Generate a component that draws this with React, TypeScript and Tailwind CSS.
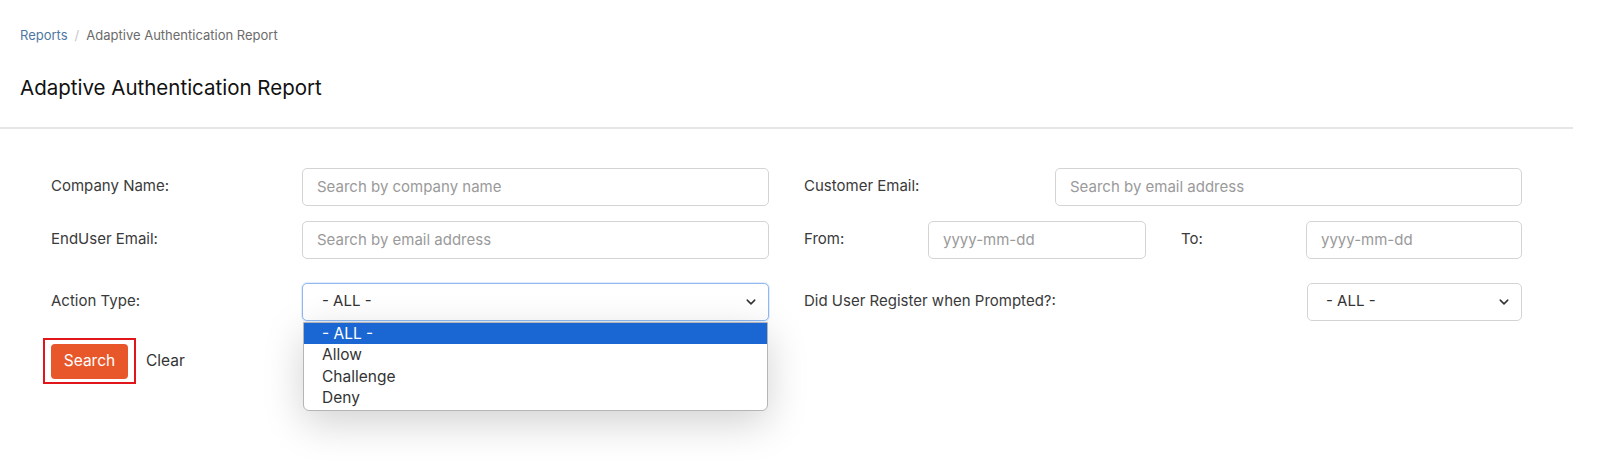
import React from 'react';

const font = { fontFamily: 'Inter, "Noto Sans", sans-serif' };

function Chevron() {
  return (
    <svg width="10" height="10" viewBox="0 0 16 16" className="shrink-0">
      <path d="M2 5l6 6 6-6" fill="none" stroke="#333" strokeWidth="2.4" strokeLinecap="round" strokeLinejoin="round" />
    </svg>
  );
}

function TextInput({ placeholder, className = '' }: { placeholder: string; className?: string }) {
  return (
    <input
      placeholder={placeholder}
      className={`h-[38px] rounded-[5px] border border-[#d4d4d4] bg-white px-[14px] text-[15px] text-[#333] placeholder:text-[#9a9a9a] outline-none ${className}`}
    />
  );
}

function Label({ children, className = '' }: { children: React.ReactNode; className?: string }) {
  return <label className={`shrink-0 text-[15px] text-[#3a3a3a] ${className}`}>{children}</label>;
}

const options = ['- ALL -', 'Allow', 'Challenge', 'Deny'];

export default function App() {
  return (
    <div className="min-h-[462px] w-[1610px] bg-white overflow-hidden" style={font}>
      <div className="w-[1573px]">
        <div className="px-5 pt-[26px]">
          <nav className="flex items-center gap-[7px] text-[13px]">
            <a className="text-[#4f77a3]">Reports</a>
            <span className="text-[#c8c8c8]">/</span>
            <span className="text-[#6b6b6b]">Adaptive Authentication Report</span>
          </nav>
          <h1 className="mt-[28px] text-[20.5px] font-normal text-[#111] leading-[28px]">Adaptive Authentication Report</h1>
        </div>
        <div className="mt-[25px] h-[2px] bg-[#e6e6e6]" />

        <div className="pl-[51px] pt-[39px] pr-[51px]">
          {/* row 1 */}
          <div className="flex gap-[35px]">
            <div className="flex w-[718px] items-center">
              <Label className="w-[251px]">Company Name:</Label>
              <TextInput placeholder="Search by company name" className="w-[467px]" />
            </div>
            <div className="flex w-[718px] items-center">
              <Label className="w-[251px]">Customer Email:</Label>
              <TextInput placeholder="Search by email address" className="w-[467px]" />
            </div>
          </div>

          {/* row 2 */}
          <div className="mt-[15px] flex gap-[35px]">
            <div className="flex w-[718px] items-center">
              <Label className="w-[251px]">EndUser Email:</Label>
              <TextInput placeholder="Search by email address" className="w-[467px]" />
            </div>
            <div className="flex w-[718px] gap-[35px]">
              <div className="flex w-[342px] items-center">
                <Label className="w-[124px]">From:</Label>
                <TextInput placeholder="yyyy-mm-dd" className="w-[218px]" />
              </div>
              <div className="flex w-[341px] items-center">
                <Label className="w-[125px]">To:</Label>
                <TextInput placeholder="yyyy-mm-dd" className="w-[216px]" />
              </div>
            </div>
          </div>

          {/* row 3 */}
          <div className="mt-[24px] flex gap-[35px]">
            <div className="flex w-[718px] items-center">
              <Label className="w-[251px]">Action Type:</Label>
              <div className="relative w-[467px]">
                <div className="flex h-[38px] items-center justify-between rounded-[5px] border border-[#8fb9f0] bg-white pl-[19px] pr-[12px] text-[15px] text-[#333] shadow-[0_0_0_1px_rgba(143,185,240,0.25)]">
                  <span>- ALL -</span>
                  <Chevron />
                </div>
                <ul className="absolute left-[1px] top-[39px] z-10 w-[465px] overflow-hidden rounded-b-[6px] border border-[#b5b5b5] bg-white pb-[1px] text-[15.5px] text-[#333] shadow-[0_12px_40px_rgba(0,0,0,0.18)]">
                  {options.map((o, i) => (
                    <li
                      key={o}
                      className={`h-[21.5px] pl-[18px] leading-[21.5px] ${i === 0 ? 'bg-[#1a66d2] text-white' : ''}`}
                    >
                      {o}
                    </li>
                  ))}
                </ul>
              </div>
            </div>
            <div className="flex w-[718px] items-center">
              <Label className="w-[503px]">Did User Register when Prompted?:</Label>
              <div className="flex h-[38px] w-[215px] items-center justify-between rounded-[5px] border border-[#d4d4d4] bg-white pl-[18px] pr-[12px] text-[15px] text-[#333]">
                <span>- ALL -</span>
                <Chevron />
              </div>
            </div>
          </div>

          {/* actions */}
          <div className="mt-[17px] flex items-center">
            <div className="-ml-[8px] border-2 border-[#e0161b] pl-[6px] pr-[6px] pt-[4px] pb-[3px]">
              <button className="h-[35px] w-[77px] rounded-[4px] bg-[#e8572a] text-[15.5px] text-white">Search</button>
            </div>
            <button className="ml-[10px] text-[15.5px] text-[#333]">Clear</button>
          </div>
        </div>
      </div>
    </div>
  );
}
